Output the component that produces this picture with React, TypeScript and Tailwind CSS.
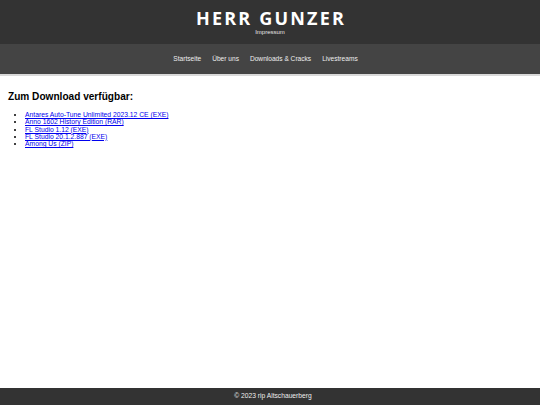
const downloads = [
  "Antares Auto-Tune Unlimited 2023.12 CE (EXE)",
  "Anno 1602 History Edition (RAR)",
  "FL Studio 1.12 (EXE)",
  "FL Studio 20.1.2.887 (EXE)",
  "Among Us (ZIP)",
];

const navItems = ["Startseite", "Über uns", "Downloads & Cracks", "Livestreams"];

export default function App() {
  return (
    <div className="flex flex-col h-[405px] w-[540px] bg-white font-['Liberation_Sans',Arial,sans-serif]">
      <header className="flex flex-col items-center bg-[#333333] h-[44px] pt-[8px]">
        <h1 className="font-['Open_Sans',sans-serif] font-bold text-[18px] leading-[21px] tracking-[2.2px] text-white pl-[2px]">
          HERR GUNZER
        </h1>
        <a className="text-[6px] leading-[7px] text-[#e5e5e5]">Impressum</a>
      </header>

      <nav className="flex justify-center items-center gap-[11px] bg-[#444444] h-[32px] pr-[9px] border-b-2 border-[#d9d9d9] text-[6.6px] text-[#eeeeee]">
        {navItems.map((item) => (
          <a key={item}>{item}</a>
        ))}
      </nav>

      <main className="flex-1 px-[8px] pt-[15px]">
        <h2 className="font-bold text-[10.1px] leading-[12px] text-black">
          Zum Download verfügbar:
        </h2>
        <ul className="list-disc pl-[17px] mt-[8px] text-[6.75px] leading-[7.25px]">
          {downloads.map((item) => (
            <li key={item}>
              <a href="#" className="text-[#0000ee] underline underline-offset-[1px]">
                {item}
              </a>
            </li>
          ))}
        </ul>
      </main>

      <footer className="flex justify-center items-center bg-[#333333] h-[17px] pl-[6px] text-[6.7px] text-[#eeeeee]">
        © 2023 rip Altschauerberg
      </footer>
    </div>
  );
}
